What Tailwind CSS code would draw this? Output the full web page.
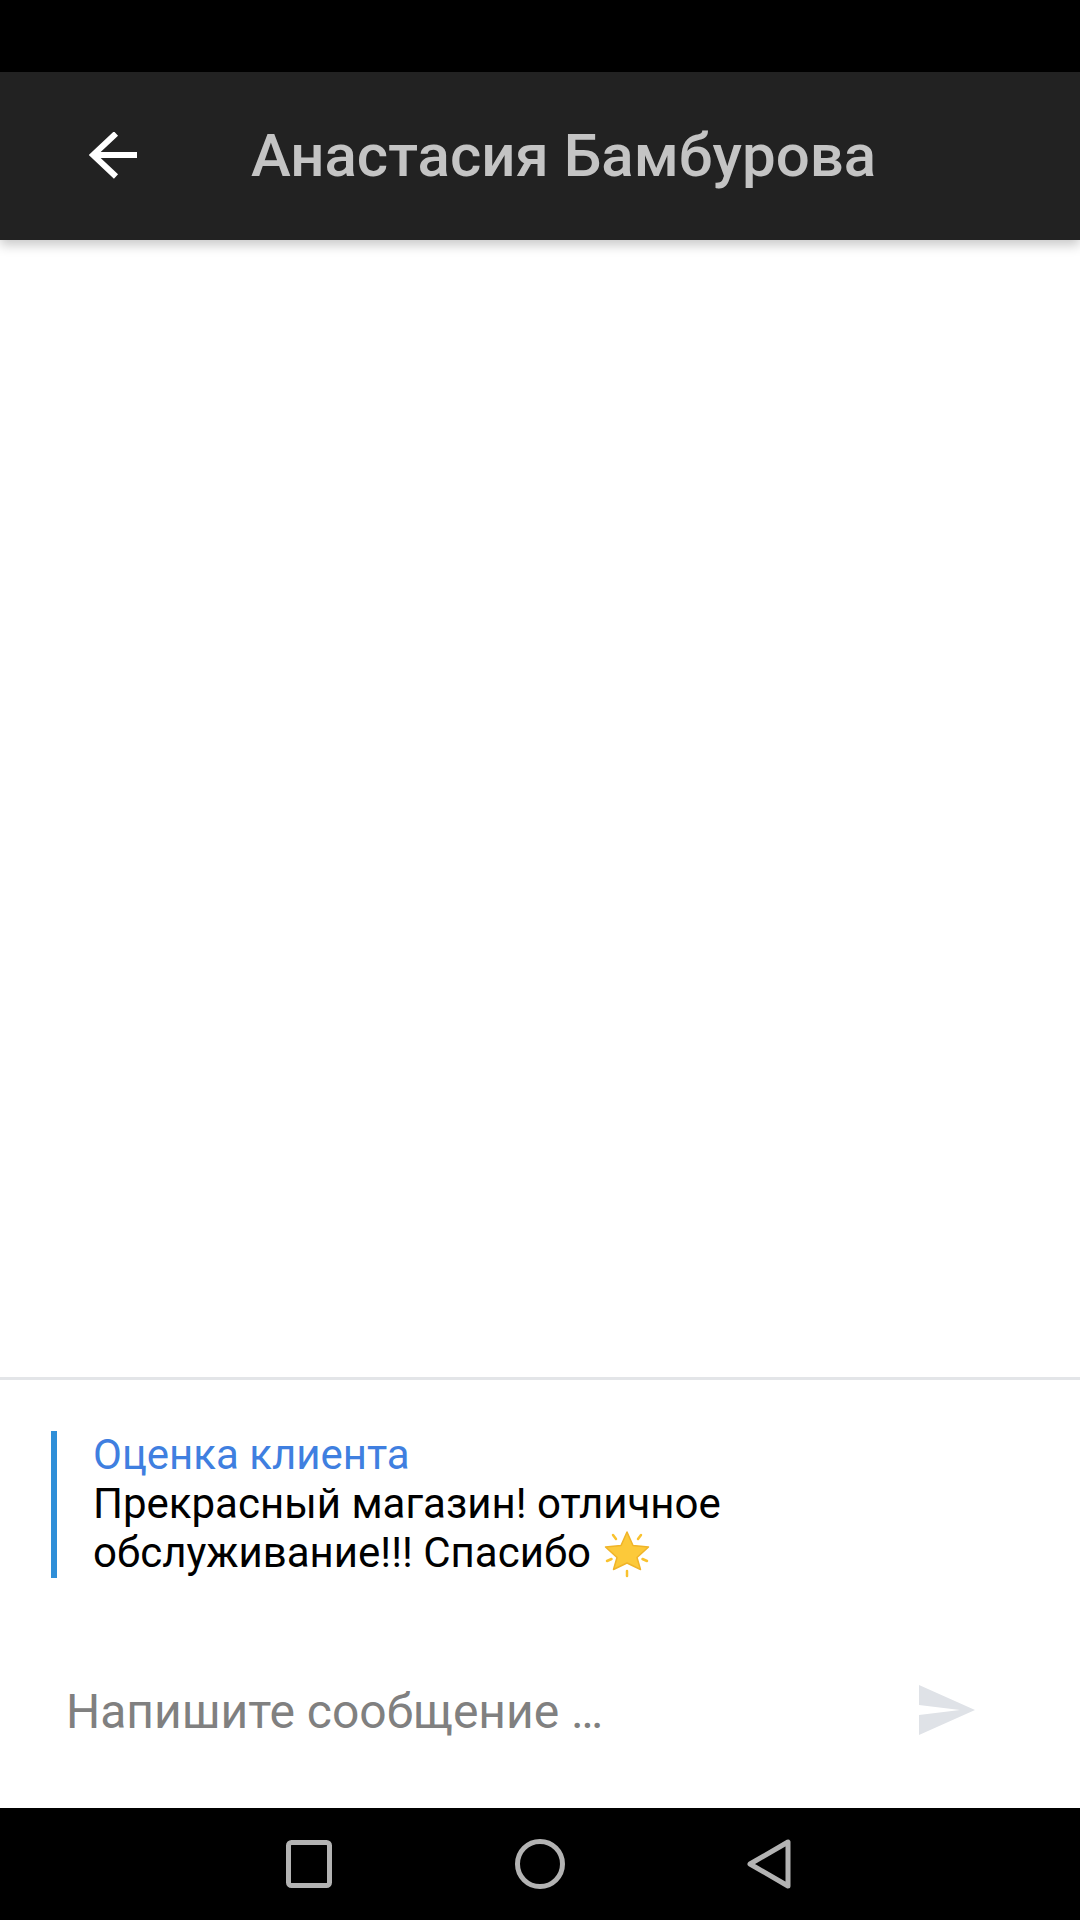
<!DOCTYPE html>
<html lang="ru">
<head>
  <meta charset="UTF-8">
  <meta name="viewport" content="width=device-width, initial-scale=1.0">
  <title>Чат</title>
  <script src="https://cdn.jsdelivr.net/npm/@tailwindcss/browser@4"></script>
</head>
<body class="bg-white font-['Roboto',sans-serif]">
  <div class="flex flex-col w-[1080px] h-[1920px] overflow-hidden">
    <!-- status bar -->
    <div class="h-[72px] bg-black shrink-0"></div>

    <!-- header -->
    <header class="relative z-10 h-[168px] shrink-0 flex items-center bg-[#222222] pl-[89px] shadow-[0_5px_11px_rgba(0,0,0,0.22)]">
      <svg class="w-[48px] h-[48px] shrink-0" viewBox="0 0 48 48" fill="none" stroke="#ffffff" stroke-width="6">
        <path d="M49 23H5"/>
        <path d="M27 1.500L4 23L27 44.500"/>
      </svg>
      <h1 class="ml-[114px] text-[60px] leading-none font-medium text-[#c4c4c4]">Анастасия Бамбурова</h1>
    </header>

    <!-- messages -->
    <main class="flex-1"></main>

    <!-- client rating quote -->
    <section class="h-[431px] shrink-0 border-t-[3px] border-[#e3e5e8] pt-[51px]">
      <div class="flex flex-col ml-[51px] w-[900px] h-[147px] border-l-[6px] border-[#2f8fd8] pl-[36px] text-[42px] leading-[49px]">
        <div class="-mt-[1px] text-[#3f7fe0]">Оценка клиента</div>
        <div class="text-black">Прекрасный магазин! отличное<br>обслуживание!!! Спасибо
          <svg class="inline-block w-[50px] h-[50px] align-[-11px]" viewBox="0 0 50 50">
            <path d="M25 4L31 17.500L46.500 19L35 29.500L38.500 41.500L25 35L11.500 41.500L15 29.500L3.500 19L19 17.500Z" fill="#fcc93a" stroke="#f0b428" stroke-width="1.500" stroke-linejoin="round"/>
            <path d="M11 7L14 11M39 7L36 11M5 33L9.500 31M45 33L40.500 31M25 43V48" stroke="#f9c22e" stroke-width="2.500" stroke-linecap="round"/>
          </svg>
        </div>
      </div>

      <!-- input row -->
      <div class="flex items-center justify-between mt-[98px] pl-[66px] pr-[105px]">
        <span class="pt-[6px] text-[48px] leading-[60px] text-[#808080]">Напишите сообщение …</span>
        <svg class="w-[56px] h-[50px] mt-[2px]" viewBox="0 0 56 50">
          <path d="M0 0L56 25L0 50V30L41 25L0 20Z" fill="#dfe2e7"/>
        </svg>
      </div>
    </section>

    <!-- nav bar -->
    <nav class="h-[112px] shrink-0 bg-black flex items-start pt-[31px] pl-[286px]">
      <svg class="w-[46px] h-[48px] mt-[1px]" viewBox="0 0 46 48" fill="none" stroke="#b3b3b3" stroke-width="5">
        <rect x="2.500" y="2.500" width="41" height="43" rx="3"/>
      </svg>
      <svg class="w-[50px] h-[50px] ml-[183px]" viewBox="0 0 50 50" fill="none" stroke="#b3b3b3" stroke-width="5">
        <circle cx="25" cy="25" r="22.500"/>
      </svg>
      <svg class="w-[44px] h-[50px] ml-[182px]" viewBox="0 0 44 50" fill="none" stroke="#b3b3b3" stroke-width="5" stroke-linejoin="round">
        <path d="M41 3V47L3 25Z"/>
      </svg>
    </nav>
  </div>
</body>
</html>
